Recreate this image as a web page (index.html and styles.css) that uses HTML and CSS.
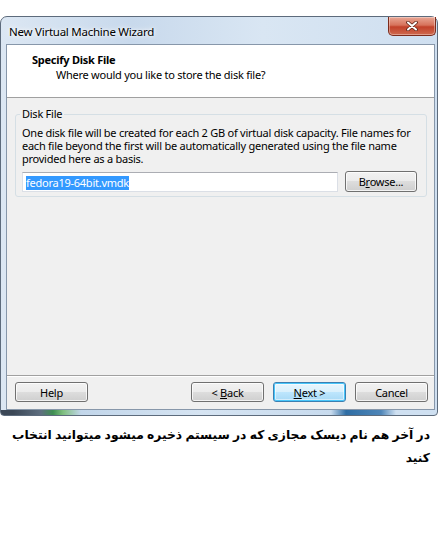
FILE: index.html
```html
<!DOCTYPE html>
<html lang="en">
<head>
<meta charset="UTF-8" />
<title>New Virtual Machine Wizard</title>
<link rel="stylesheet" href="styles.css">
</head>
<body>
<div class="page">
  <div class="window">
    <div class="titlebar">
      <span class="title">New Virtual Machine Wizard</span>
      <button class="close" aria-label="Close">
        <svg width="12" height="10" viewBox="0 0 12 10">
          <path d="M2 1.5 L10 8.5 M10 1.5 L2 8.5" stroke="#5b2418" stroke-width="3.6" stroke-linecap="round"/>
          <path d="M2 1.5 L10 8.5 M10 1.5 L2 8.5" stroke="#fff" stroke-width="2" stroke-linecap="round"/>
        </svg>
      </button>
    </div>

    <div class="client">
      <div class="header">
        <h1>Specify Disk File</h1>
        <p>Where would you like to store the disk file?</p>
      </div>

      <div class="content">
        <fieldset class="group">
          <legend>Disk File</legend>
          <p>One disk file will be created for each 2 GB of virtual disk capacity. File names for each file beyond the first will be automatically generated using the file name provided here as a basis.</p>
          <div class="fileRow">
            <div class="textbox"><span class="sel">fedora19-64bit.vmdk</span></div>
            <button class="btn browse">B<u>r</u>owse...</button>
          </div>
        </fieldset>
      </div>

      <div class="footer">
        <button class="btn help">Help</button>
        <button class="btn">&lt; <u>B</u>ack</button>
        <button class="btn default"><u>N</u>ext &gt;</button>
        <button class="btn">Cancel</button>
      </div>
    </div>
  </div>

  <p class="caption" dir="rtl" lang="fa">در آخر هم نام دیسک مجازی که در سیستم ذخیره میشود میتوانید انتخاب کنید</p>
</div>
</body>
</html>
```

FILE: styles.css
```css
/* ---------- reset ---------- */
*
{
  box-sizing:border-box;
}
body
{
  margin:0;
  background:#fff;
  font-family:"Noto Sans","Liberation Sans",sans-serif;
  font-size:11px;
  letter-spacing:-0.25px;
  color:#000;
}
.page
{
  padding-top:16px;
}

/* ===== window frame ===== */
.window
{
  width:438px;
  height:400px;
  display:flex;
  flex-direction:column;
  padding:0 2px 5px 5px;
  border:1px solid #5d6b7c;
  border-radius:7px 7px 4px 4px;
  background:
    linear-gradient(to right,
      #3b4756 0, #3b4756 12px,
      #5f6f80 40px, #3f8f52 52px, #7fbf7f 62px,
      #c2d6ea 80px, #d6e4f2 200px, #c8dbee 330px,
      #2e6da4 345px, #4f86b8 380px, #cfe0f1 395px, #cfe0f1 100%)
      bottom / 100% 5px no-repeat,
    linear-gradient(to right, #dce7f3 0, #c8d9ec 30%, #d9e6f3 60%, #cfdff0 100%);
}
.titlebar
{
  height:27px;
  display:flex;
  align-items:flex-start;
  justify-content:space-between;
}
.title
{
  padding:8px 0 0 3px;
  font-size:11.5px;
  line-height:14px;
  color:#000;
  text-shadow:0 0 6px #fff,0 0 3px #fff;
}
.close
{
  width:48px;
  height:19px;
  margin:0 -1px 0 0;
  padding:0;
  display:flex;
  align-items:center;
  justify-content:center;
  border:1px solid #7c2b1c;
  border-top:none;
  border-radius:0 0 5px 5px;
  background:linear-gradient(#e9a795 0,#d7735c 45%,#c2412a 55%,#cf6a4f 100%);
  box-shadow:inset 0 0 0 1px rgba(255,255,255,.35);
}

/* ===== client area ===== */
.client
{
  flex:1;
  display:flex;
  flex-direction:column;
  border:1px solid #8797aa;
  background:#f0f0f0;
}
.header
{
  height:53px;
  padding:8px 0 0 25px;
  background:#fff;
  border-bottom:1px solid #a0a0a0;
}
.header h1
{
  margin:0;
  font-size:11px;
  font-weight:bold;
  line-height:14px;
}
.header p
{
  margin:1px 0 0 24px;
  line-height:14px;
}

.content
{
  flex:1;
  padding:9px 7px 0 8px;
  border-bottom:1px solid #a0a0a0;
  box-shadow:0 1px 0 #fff;
}
.group
{
  margin:0;
  padding:0 9px 4px 4px;
  border:1px solid #d5dfe5;
  border-radius:3px;
}
.group legend
{
  padding:0 2px;
  line-height:14px;
}
.group p
{
  margin:5px 0 0 2px;
  line-height:13px;
}
.fileRow
{
  display:flex;
  align-items:center;
  gap:7px;
  margin:6px 0 0 2px;
}
.textbox
{
  width:316px;
  height:20px;
  padding:2px 3px;
  background:#fff;
  border:1px solid #dbdfe6;
  border-top-color:#abadb3;
}
.sel
{
  display:inline-block;
  line-height:14px;
  background:#3399ff;
  color:#fff;
}

/* ===== buttons ===== */
.btn
{
  width:73px;
  height:20px;
  padding:0;
  font:inherit;
  letter-spacing:inherit;
  color:#000;
  border:1px solid #707070;
  border-radius:3px;
  background:linear-gradient(#f2f2f2 0,#ebebeb 50%,#dddddd 50%,#cfcfcf 100%);
  box-shadow:inset 0 0 0 1px rgba(255,255,255,.75);
}
.btn.browse
{
  width:72px;
  height:21px;
}
.btn.default
{
  border-color:#3c7fb1;
  background:linear-gradient(#eaf6fd 0,#d9f0fc 50%,#bee6fd 50%,#a7d9f5 100%);
  box-shadow:inset 0 0 0 1px #48c6fa,inset 0 0 0 2px rgba(255,255,255,.5);
}
.footer
{
  height:33px;
  display:flex;
  gap:9px;
  padding:6px 6px 0 8px;
}
.btn.help
{
  margin-right:auto;
}

/* ===== caption ===== */
.caption
{
  margin:8px 12px 0 8px;
  font-family:"DejaVu Sans",sans-serif;
  font-size:12.3px;
  font-weight:bold;
  letter-spacing:0;
  word-spacing:-1px;
  line-height:23px;
}
```
